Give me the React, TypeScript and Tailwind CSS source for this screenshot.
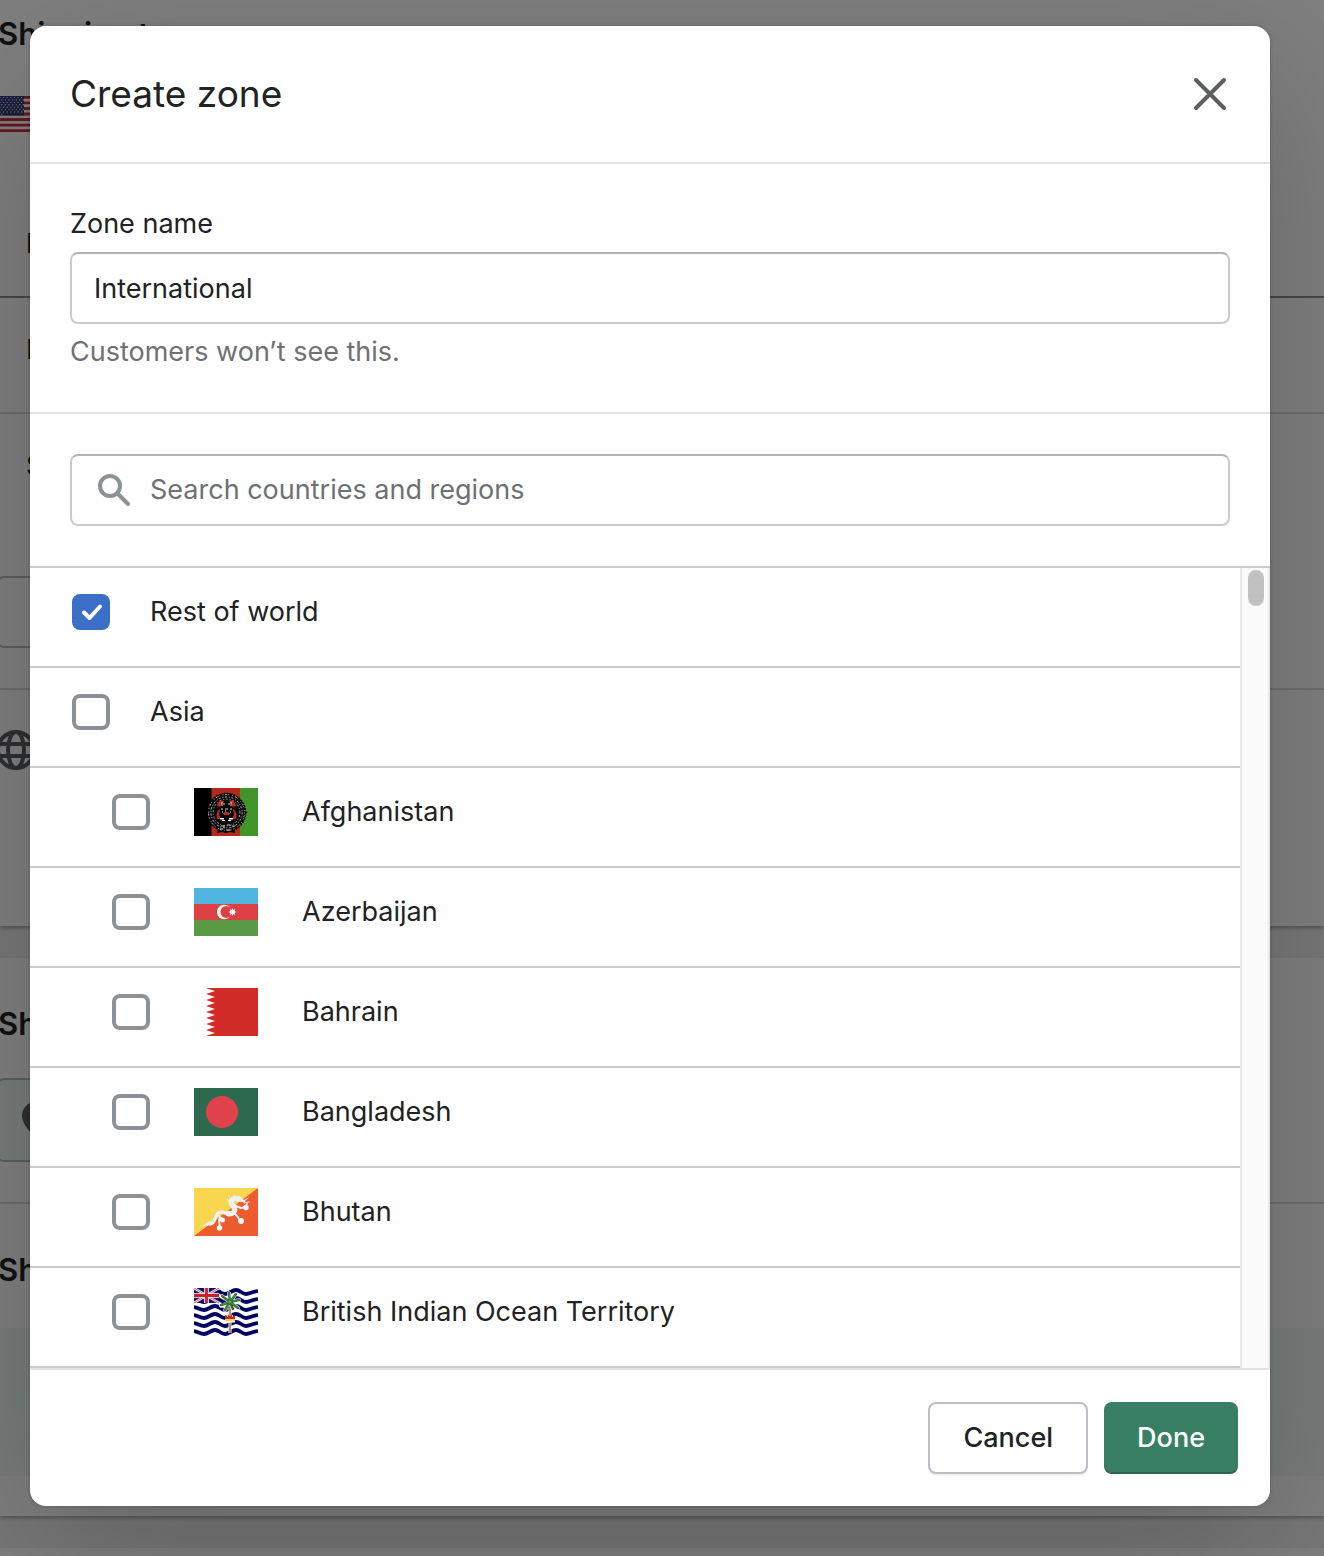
import { useState } from "react";
import type { ReactNode } from "react";

const AfghanistanFlag = () => (
  <svg viewBox="0 0 64 48" className="h-12 w-16 shrink-0" aria-hidden="true">
    <path fill="#000" d="M0 0h18v48H0z" />
    <path fill="#b5281e" d="M17.5 0h29v48h-29z" />
    <path fill="#429629" d="M46 0h18v48H46z" />
    <circle cx="32.5" cy="24.5" r="19" fill="#0c0c0c" stroke="#000" strokeWidth="1.6" strokeDasharray="2 1" />
    <path fill="#000" d="m50 22 3.500 2.500L50 27zM24 41l-1 4 5-1 4 1 4-1 5 1-1-4z" />
    <g fill="none" stroke="#c9c9c9">
      <circle cx="32.5" cy="24.5" r="18" strokeWidth="1" strokeDasharray="1 2 2 1 1 3" />
      <circle cx="32.5" cy="24.5" r="15.600" strokeWidth="1" strokeDasharray="2 2 1 1.5" />
      <circle cx="32.5" cy="24.5" r="13.400" strokeWidth="0.8" strokeDasharray="1 1.6 2 2" />
      <path strokeWidth="1" d="M27 38h4m2-1h3m2 1h3M26 41h3m3 1h4" />
    </g>
    <path fill="#c32a20" d="M23 18c1-5 4-7 7-5l-4 6zM42 18c-1-5-4-7-7-5l4 6zM23 31c-1-5 0-8 3-10l-1 6 2 4zM42 31c1-5 0-8-3-10l1 6-2 4z" />
    <path fill="#000" d="M26 32V20l3-6h7l3 6v12z" />
    <path fill="none" stroke="#ddd" strokeWidth="1" d="M28 14v4m2-3v2m5-2v2m2-3v4M27 21h2m2 0h3m2 0h2M28 24h1m2-1h1m4 1h1" />
    <path fill="#c32a20" d="M29 26c1-3 6-3 7 0l-1 1h-5z" />
    <path fill="#fff" d="M26 30h4v1.500h-4zM35 30h4v1.500h-4zM28 32h3v1h-3zM34 32h3v1h-3z" />
  </svg>
);

const AzerbaijanFlag = () => (
  <svg viewBox="0 0 64 48" className="h-12 w-16 shrink-0" aria-hidden="true">
    <path fill="#51b5e0" d="M0 0h64v16H0z" />
    <path fill="#dc4045" d="M0 16h64v16H0z" />
    <path fill="#5b9a45" d="M0 32h64v16H0z" />
    <circle cx="30.3" cy="24" r="7.3" fill="#fff" />
    <circle cx="32.4" cy="24" r="6" fill="#dc4045" />
    <path fill="#fff" d="m38.5 20 .8 2.1 2-1-.9 2 2.1.9-2.1.9.9 2-2-1-.8 2.1-.8-2.1-2 1 .9-2-2.1-.9 2.1-.9-.9-2 2 1z" />
  </svg>
);

const BahrainFlag = () => (
  <svg viewBox="0 0 64 48" className="h-12 w-16 shrink-0" aria-hidden="true">
    <path fill="#fff" d="M0 0h64v48H0z" />
    <path
      fill="#d02b26"
      d="M12 0h52v48H12l9-3-9-3 9-3-9-3 9-3-9-3 9-3-9-3 9-3-9-3 9-3-9-3 9-3-9-3 9-3-9-3 9-3z"
    />
  </svg>
);

const BangladeshFlag = () => (
  <svg viewBox="0 0 64 48" className="h-12 w-16 shrink-0" aria-hidden="true">
    <path fill="#2d694f" d="M0 0h64v48H0z" />
    <circle cx="28" cy="24" r="16" fill="#e0424b" />
  </svg>
);

const BhutanFlag = () => (
  <svg viewBox="0 0 64 48" className="h-12 w-16 shrink-0" aria-hidden="true">
    <path fill="#f8d64f" d="M0 0h64v48H0z" />
    <path fill="#ed5b2f" d="M64 0v48H0z" />
    <g fill="none" stroke="#f1f1f1" strokeLinecap="round" strokeLinejoin="round">
      <path strokeWidth="1.6" d="m9 38 4-2 3-2.500M13 37l3-1" />
      <path strokeWidth="3.4" d="M16 36c6-1 4-7 8-11 4-3 7 1 10 1" />
      <path strokeWidth="5.4" d="M34 25.500c5 1 8-2 6-6-1-3-3.500-3-3-6 1-3 5-3.500 8-2.500" />
      <path strokeWidth="3" d="M43 12c3-1 4 1 7 1" />
      <path strokeWidth="2" d="m24 27 4 4M26 29c-2 4 0 6-.5 9M39 24l4 4 3 4M42 18l5 2 4-1 2-3" />
      <path strokeWidth="1" d="m35 13-2-2M36 10l-1-2M40 9V7M44 9l1-1M50 13l4-3M50 15l5-1" />
    </g>
    <g fill="#fff">
      <circle cx="28.500" cy="32" r="2.500" />
      <circle cx="25.500" cy="40" r="2.700" />
      <circle cx="47" cy="33" r="2.900" />
      <circle cx="52" cy="19.500" r="2.700" />
    </g>
    <path fill="none" stroke="#ed5b2f" strokeWidth="0.800" d="m46 14.500 4 1" />
  </svg>
);

const waveRows = [4, 12, 20, 28, 36, 44];

const OceanTerritoryFlag = () => (
  <svg viewBox="0 0 64 48" className="h-12 w-16 shrink-0" aria-hidden="true">
    <path fill="#fff" d="M0 0h64v48H0z" />
    {waveRows.map((y) => (
      <path
        key={y}
        transform={`translate(0 ${y})`}
        fill="none"
        stroke="#00005f"
        strokeWidth="3.8"
        d="M-1-1C3-1 6 2 10 2s7-4 11-4 6 4 10 4 7-4 11-4 6 4 10 4 7-3 13-3"
      />
    ))}
    <path fill="#10106b" d="M0 0h25v15H0z" />
    <path stroke="#fff" strokeWidth="2.400" d="m0 0 25 15M25 0 0 15" />
    <path stroke="#c8262b" strokeWidth="0.800" d="m0 0 25 15M25 0 0 15" />
    <path stroke="#fff" strokeWidth="4.600" d="M12.500 0v15M0 7.500h25" />
    <path stroke="#c8202a" strokeWidth="2.800" d="M12.500 0v15M0 7.500h25" />
    <path fill="none" stroke="#fff" strokeWidth="3" d="M36 20v25" />
    <path fill="none" stroke="#a5642f" strokeWidth="1.500" d="M36 14v31" />
    <g fill="none" strokeLinecap="round">
      <path stroke="#fff" strokeWidth="3.600" d="m36 14-9 4m9-4-8-6m8 6-1-9m1 9 6-8m-6 8 9-2m-9 2 8 6m-8-6-5 8m5-8 3 7" />
      <path stroke="#27692d" strokeWidth="2.400" d="m36 14-9 3m9-3-8-6m8 6-1-9m1 9 6-8m-6 8 9-2m-9 2 8 6m-8-6-5 8m5-8 3 7" />
      <path stroke="#7fae7b" strokeWidth="0.500" d="m36 14-9 3m9-3-8-6m8 6-1-9m1 9 6-8m-6 8 9-2m-9 2 8 6m-8-6-5 8" />
    </g>
    <path fill="#c8262b" d="m31 27 2 2 1-2 2 1.500 2-1.500 1 2 2-2v7H31z" />
    <path fill="#f7d34c" d="M31 31h10v2H31zM33 27h1v2h-1zM38 27h1v2h-1z" />
    <path fill="#fff" d="M31 33h10v1.500H31z" />
  </svg>
);

const stars = Array.from({ length: 50 }, (_, i) => ({
  x: 2 + (i % 7) * 3.6 + (Math.floor(i / 7) % 2) * 1.8,
  y: 1.6 + Math.floor(i / 7) * 2.4,
}));

const UnitedStatesFlag = () => (
  <svg viewBox="0 0 48 36" className="h-9 w-12" aria-hidden="true">
    <path fill="#fff" d="M0 0h48v36H0z" />
    <path stroke="#c9303e" strokeWidth="2.770" d="M0 1.400h48M0 6.900h48M0 12.500h48M0 18h48M0 23.500h48M0 29.100h48M0 34.600h48" />
    <path fill="#2c3a72" d="M0 0h26v19.400H0z" />
    {stars.map((star) => (
      <circle key={`${star.x}-${star.y}`} cx={star.x} cy={star.y} r="0.7" fill="#fff" />
    ))}
  </svg>
);

const GlobeIcon = () => (
  <svg viewBox="0 0 40 40" className="size-10" fill="none" stroke="#5c5f62" strokeWidth="4" aria-hidden="true">
    <circle cx="20" cy="20" r="18" />
    <ellipse cx="20" cy="20" rx="8" ry="18" />
    <path d="M2 14h36M2 26h36" />
  </svg>
);

const PinIcon = () => (
  <svg viewBox="0 0 28 40" className="h-10 w-7" fill="#5c5f62" aria-hidden="true">
    <path d="M14 2C6 2 0 8 0 16c0 10 14 22 14 22s14-12 14-22C28 8 22 2 14 2z" />
  </svg>
);

interface Zone {
  id: string;
  name: string;
  flag?: ReactNode;
}

const zones: Zone[] = [
  { id: "rest", name: "Rest of world" },
  { id: "asia", name: "Asia" },
  { id: "af", name: "Afghanistan", flag: <AfghanistanFlag /> },
  { id: "az", name: "Azerbaijan", flag: <AzerbaijanFlag /> },
  { id: "bh", name: "Bahrain", flag: <BahrainFlag /> },
  { id: "bd", name: "Bangladesh", flag: <BangladeshFlag /> },
  { id: "bt", name: "Bhutan", flag: <BhutanFlag /> },
  { id: "io", name: "British Indian Ocean Territory", flag: <OceanTerritoryFlag /> },
];

interface ZoneRowProps {
  zone: Zone;
  checked: boolean;
  onToggle: () => void;
}

const ZoneRow = ({ zone, checked, onToggle }: ZoneRowProps) => {
  return (
    <li className="border-b-2 border-[#c9cccf]">
      <label
        className={`flex items-center pt-5 pb-[30px] ${zone.flag ? "gap-11 pl-[82px]" : "gap-10 pl-[42px]"}`}
      >
        <span className="relative flex h-12 items-center">
          <input
            type="checkbox"
            checked={checked}
            onChange={onToggle}
            className="peer h-9 w-[38px] appearance-none rounded-lg border-4 border-[#8c9196] bg-white checked:border-[#3c6fc8] checked:bg-[#3c6fc8]"
          />
          <svg
            viewBox="0 0 38 36"
            className="pointer-events-none absolute top-1.5 left-0 hidden h-9 w-[38px] peer-checked:block"
            fill="none"
            stroke="#fff"
            strokeWidth="4"
            strokeLinecap="round"
            strokeLinejoin="round"
            aria-hidden="true"
          >
            <path d="m12 18.500 5.500 5.500L28 12.500" />
          </svg>
        </span>
        {zone.flag}
        <span>{zone.name}</span>
      </label>
    </li>
  );
};

const ShippingPage = () => {
  return (
    <div className="bg-[#f1f1f1] whitespace-nowrap" aria-hidden="true">
      <section className="bg-white pb-[156px] shadow-[0_2px_4px_rgba(0,0,0,0.3)]">
        <h2 className="-ml-0.5 pt-3.5 text-[31px] leading-10 font-semibold">Shipping to</h2>
        <div className="-ml-0.5 pt-[42px]">
          <UnitedStatesFlag />
        </div>
        <p className="border-b-2 border-[#8c9196] pt-[92px] pb-8 pl-[26px] leading-10 font-medium">Rate name</p>
        <p className="border-b-2 border-[#d9dbdd] pt-8 pb-[42px] pl-[26px] leading-10">Economy</p>
        <p className="pt-8 pl-[26px] leading-10">Standard</p>
        <div className="mt-[90px] -ml-1 h-[72px] w-40 rounded-lg border-2 border-[#babfc3]" />
        <div className="mt-10 border-t-2 border-[#d9dbdd] pt-10">
          <div className="-ml-1">
            <GlobeIcon />
          </div>
        </div>
      </section>
      <section className="mt-8 bg-white pb-10 shadow-[0_2px_4px_rgba(0,0,0,0.3)]">
        <h2 className="-ml-0.5 pt-[46px] text-[31px] leading-10 font-semibold">Shipping from</h2>
        <div className="mt-[34px] -ml-1 flex h-[84px] w-40 items-center rounded-lg border-2 border-[#babfc3] bg-[#f1f8f5] pl-6">
          <PinIcon />
        </div>
        <h2 className="mt-10 border-t-2 border-[#d9dbdd] pt-[46px] text-[31px] leading-10 font-semibold">
          <span className="-ml-0.5">Shipping to</span>
        </h2>
        <div className="mt-[38px] h-[148px] bg-[#f1f8f5]" />
      </section>
      <section className="mt-8 h-20 bg-white" />
    </div>
  );
};

const CreateZoneDialog = () => {
  const [selected, setSelected] = useState<string[]>(["rest"]);
  const [name, setName] = useState("International");

  const toggle = (id: string) => {
    setSelected((current) =>
      current.includes(id) ? current.filter((item) => item !== id) : [...current, id]
    );
  };

  return (
    <div
      role="dialog"
      aria-modal="true"
      aria-labelledby="dialog-title"
      className="w-full overflow-hidden rounded-2xl bg-white shadow-[0_52px_160px_rgba(0,0,0,0.2),0_0_4px_rgba(0,0,0,0.2)]"
    >
      <header className="flex items-center justify-between border-b-2 border-[#e1e3e5] px-10 py-10">
        <h1 id="dialog-title" className="text-[37px] leading-14">
          Create zone
        </h1>
        <button type="button" aria-label="Close">
          <svg
            viewBox="0 0 40 40"
            className="size-10"
            fill="none"
            stroke="#5c5f62"
            strokeWidth="4"
            strokeLinecap="round"
            aria-hidden="true"
          >
            <path d="m6 6 28 28M34 6 6 34" />
          </svg>
        </button>
      </header>

      <section className="border-b-2 border-[#e1e3e5] p-10">
        <label htmlFor="zone-name" className="block leading-10">
          Zone name
        </label>
        <input
          id="zone-name"
          type="text"
          value={name}
          onChange={(e) => setName(e.target.value)}
          aria-describedby="zone-help"
          className="my-2 block h-[72px] w-full rounded-lg border-2 border-[#c9cccf] border-t-[#aeb4b9] px-[22px]"
        />
        <p id="zone-help" className="leading-10 text-[#6d7175]">
          Customers won’t see this.
        </p>
      </section>

      <section className="border-b-2 border-[#c9cccf] p-10">
        <div className="flex h-[72px] items-center gap-4 rounded-lg border-2 border-[#c9cccf] border-t-[#aeb4b9] px-[22px]">
          <svg
            viewBox="0 0 40 40"
            className="size-10 shrink-0"
            fill="none"
            stroke="#8c9196"
            strokeWidth="4"
            strokeLinecap="round"
            aria-hidden="true"
          >
            <circle cx="16" cy="16" r="10" />
            <path d="m24 24 10 10" />
          </svg>
          <input
            type="search"
            aria-label="Search countries and regions"
            placeholder="Search countries and regions"
            className="w-full outline-none placeholder:text-[#6d7175]"
          />
        </div>
      </section>

      <div className="flex">
        <ul className="grow">
          {zones.map((zone) => (
            <ZoneRow
              key={zone.id}
              zone={zone}
              checked={selected.includes(zone.id)}
              onToggle={() => toggle(zone.id)}
            />
          ))}
        </ul>
        <div className="w-[30px] border-x-2 border-[#e8e8e8] bg-[#fafafa] pt-0.5 pl-1.5">
          <div className="h-9 w-4 rounded-full bg-[#c1c1c1]" />
        </div>
      </div>

      <footer className="flex justify-end gap-4 border-t-2 border-[#e1e3e5] p-8 font-medium">
        <button
          type="button"
          className="h-[72px] rounded-lg border-2 border-[#babfc3] px-[33px] shadow-[0_2px_0_rgba(0,0,0,0.05)]"
        >
          Cancel
        </button>
        <button
          type="button"
          className="h-[72px] rounded-lg bg-[#397f63] px-[33px] text-white shadow-[inset_0_-2px_0_rgba(0,0,0,0.2)]"
        >
          Done
        </button>
      </footer>
    </div>
  );
};

const App = () => {
  return (
    <div className="relative h-screen overflow-hidden font-[Inter,sans-serif] text-[27px] text-[#202223]">
      <ShippingPage />
      <div className="absolute inset-0 overflow-hidden bg-black/50 pt-[26px] pr-[54px] pl-[30px]">
        <CreateZoneDialog />
      </div>
    </div>
  );
};

export default App;
